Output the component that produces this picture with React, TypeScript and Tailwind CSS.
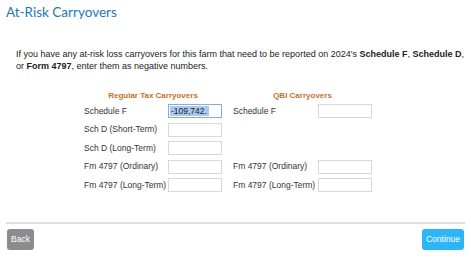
import React from "react";

const rows = [
  { label: "Schedule F", value: "-109,742.", qbi: true },
  { label: "Sch D (Short-Term)", value: "", qbi: false },
  { label: "Sch D (Long-Term)", value: "", qbi: false },
  { label: "Fm 4797 (Ordinary)", value: "", qbi: true },
  { label: "Fm 4797 (Long-Term)", value: "", qbi: true },
];

function Field({ value }: { value?: string }) {
  const focused = !!value;
  return (
    <div
      className={`w-[54px] h-[14px] flex items-center px-[1px] text-[8.5px] leading-none text-[#222] bg-white border ${
        focused ? "border-[#7fb0dd]" : "border-[#d8d8d8]"
      }`}
    >
      {value && <span className="bg-[#a9c9ee] py-[1px] pl-[1px] pr-[2px]">{value}</span>}
    </div>
  );
}

export default function App() {
  return (
    <div
      className="w-[471px] h-[258px] bg-white relative overflow-hidden"
      style={{ fontFamily: '"Liberation Sans", Arial, sans-serif' }}
    >
      <h1
        className="pl-[6px] pt-[4px] text-[13.5px] leading-[16px] text-[#1b78b8]"
        style={{ fontFamily: 'Lato, "Open Sans", sans-serif' }}
      >
        At-Risk Carryovers
      </h1>

      <p className="mt-[28px] pl-[16px] text-[9px] leading-[12px] text-[#222] whitespace-nowrap">
        If you have any at-risk loss carryovers for this farm that need to be reported on 2024's{" "}
        <b>Schedule F</b>, <b>Schedule D</b>,
        <br />
        or <b>Form 4797</b>, enter them as negative numbers.
      </p>

      <div className="mt-[19px] flex pl-[84px]">
        <div className="w-[149px]">
          <div className="text-center text-[8px] font-bold text-[#c4712b] leading-[10px] w-[138px] whitespace-nowrap">
            Regular Tax Carryovers
          </div>
          <div className="mt-[3px] flex flex-col gap-[4.5px]">
            {rows.map((r) => (
              <div key={r.label} className="flex items-center h-[14px]">
                <span className="w-[84px] text-[8.5px] text-[#333] whitespace-nowrap">{r.label}</span>
                <Field value={r.value} />
              </div>
            ))}
          </div>
        </div>
        <div className="w-[150px]">
          <div className="text-center text-[8px] font-bold text-[#c4712b] leading-[10px] w-[139px] whitespace-nowrap">
            QBI Carryovers
          </div>
          <div className="mt-[3px] flex flex-col gap-[4.5px]">
            {rows.map((r) => (
              <div key={r.label} className="flex items-center h-[14px]">
                {r.qbi && (
                  <>
                    <span className="w-[85px] text-[8.5px] text-[#333] whitespace-nowrap">{r.label}</span>
                    <Field />
                  </>
                )}
              </div>
            ))}
          </div>
        </div>
      </div>

      <div className="absolute left-0 right-0 top-[222px] px-[6px]">
        <div className="h-[2px] bg-[#dedede]" />
        <div className="mt-[5px] flex justify-between pl-[1px] pr-[1px]">
          <button className="h-[21px] px-[4px] rounded-[3px] bg-[#8c8c90] text-white text-[8.5px]">
            Back
          </button>
          <button className="h-[21px] px-[4px] rounded-[3px] bg-[#2db6f5] text-white text-[8.5px]">
            Continue
          </button>
        </div>
      </div>
    </div>
  );
}
